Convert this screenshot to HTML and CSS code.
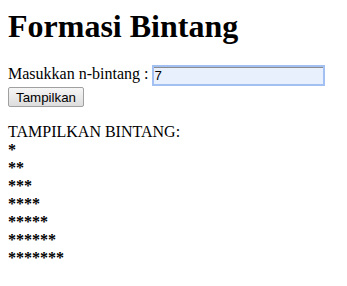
FILE: index.html
```html
<!DOCTYPE html>
<html lang="en">

<head>
    <meta charset="UTF-8">
    <title>Formasi Bintang</title>
    <link rel="stylesheet" href="styles.css">
</head>

<body>
    <h1 class="judul">Formasi Bintang</h1>
    <form class="form-bintang">
        <label for="n">Masukkan n-bintang :</label>
        <input type="text" id="n" class="input-n" value="7">
        <br>
        <button type="button" class="tombol">Tampilkan</button>
    </form>
    <div class="hasil">
        TAMPILKAN BINTANG:<br>
        <b>*</b><br>
        <b>**</b><br>
        <b>***</b><br>
        <b>****</b><br>
        <b>*****</b><br>
        <b>******</b><br>
        <b>*******</b>
    </div>
</body>

</html>
```

FILE: styles.css
```css
body {
    margin: 8px;
    font-family: "Liberation Serif", "Times New Roman", serif;
    font-size: 16px;
    color: #000;
    background: #fff;
}

.judul {
    font-size: 32px;
    margin: 0 0 19px 0;
}

.form-bintang {
    margin: 0;
}

.input-n {
    box-sizing: border-box;
    width: 173px;
    height: 21px;
    padding: 0;
    border: 2px solid #a3c0f3;
    box-shadow: inset 0 1px 0 #8c8c8c;
    background: #e8effd;
    font-family: "Liberation Sans", Arial, sans-serif;
    font-size: 13.33px;
    outline: none;
    position: relative;
    top: 1px;
}

.tombol {
    box-sizing: border-box;
    font-family: "Liberation Sans", Arial, sans-serif;
    font-size: 13.33px;
    width: 76px;
    height: 20px;
    padding: 0;
    margin-top: 2px;
    background: linear-gradient(#f6f6f6, #dddddd);
    border: 1px solid #a0a0a0;
    border-radius: 2px;
    color: #000;
}

.hasil {
    margin-top: 16px;
    line-height: 18px;
}
```
